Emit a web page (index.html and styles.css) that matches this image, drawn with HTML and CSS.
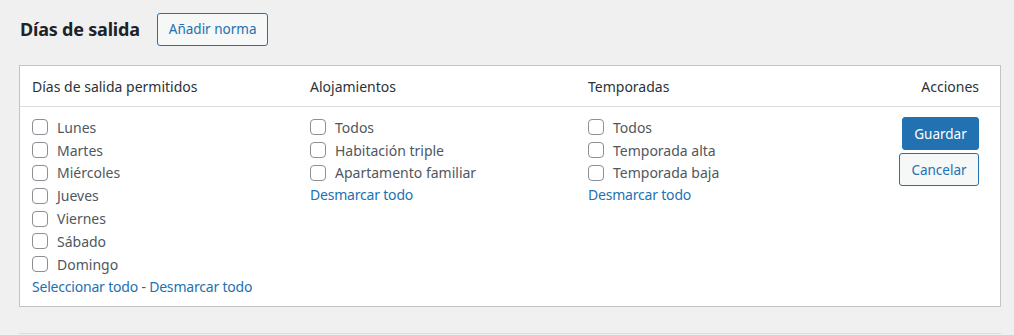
FILE: index.html
```html
<!DOCTYPE html>
<html lang="es">

<head>
    <meta charset="UTF-8">
    <meta name="viewport" content="width=device-width, initial-scale=1.0">
    <title>Días de salida</title>
    <link rel="stylesheet" href="styles.css">
</head>

<body>
    <div class="wrap">
        <div class="title-row">
            <h2 class="title">Días de salida</h2>
            <button class="btn btn-secondary">Añadir norma</button>
        </div>

        <div class="rules-table">
            <div class="head">
                <div class="cell">Días de salida permitidos</div>
                <div class="cell">Alojamientos</div>
                <div class="cell">Temporadas</div>
                <div class="cell cell-actions">Acciones</div>
            </div>
            <div class="body">
                <div class="cell">
                    <label class="check"><input type="checkbox"> Lunes</label>
                    <label class="check"><input type="checkbox"> Martes</label>
                    <label class="check"><input type="checkbox"> Miércoles</label>
                    <label class="check"><input type="checkbox"> Jueves</label>
                    <label class="check"><input type="checkbox"> Viernes</label>
                    <label class="check"><input type="checkbox"> Sábado</label>
                    <label class="check"><input type="checkbox"> Domingo</label>
                    <div class="links"><a href="#">Seleccionar todo</a> - <a href="#">Desmarcar todo</a></div>
                </div>
                <div class="cell">
                    <label class="check"><input type="checkbox"> Todos</label>
                    <label class="check"><input type="checkbox"> Habitación triple</label>
                    <label class="check"><input type="checkbox"> Apartamento familiar</label>
                    <div class="links"><a href="#">Desmarcar todo</a></div>
                </div>
                <div class="cell">
                    <label class="check"><input type="checkbox"> Todos</label>
                    <label class="check"><input type="checkbox"> Temporada alta</label>
                    <label class="check"><input type="checkbox"> Temporada baja</label>
                    <div class="links"><a href="#">Desmarcar todo</a></div>
                </div>
                <div class="cell cell-actions">
                    <button class="btn btn-primary">Guardar</button>
                    <button class="btn btn-secondary">Cancelar</button>
                </div>
            </div>
        </div>

        <div class="next-box"></div>
    </div>
</body>

</html>
```

FILE: styles.css
```css
body {
    margin: 0;
    background: #f0f0f1;
    font-family: "Noto Sans", "Open Sans", sans-serif;
    font-size: 14px;
    color: #50575e;
}

.wrap {
    padding: 12px 13px 0 19px;
}

.title-row {
    display: flex;
    align-items: center;
    gap: 17px;
    height: 34px;
    margin-left: 1px;
}

.title {
    margin: 0;
    font-size: 18px;
    font-weight: 700;
    letter-spacing: -0.2px;
    color: #1d2327;
}

.btn {
    font-family: inherit;
    font-size: 13.5px;
    border-radius: 3px;
    border: 1px solid #2271b1;
    padding: 0 11px;
    height: 33px;
    cursor: pointer;
}

.btn-secondary {
    background: #f6f7f7;
    color: #2271b1;
}

.btn-primary {
    background: #2271b1;
    color: #fff;
}

.rules-table {
    margin-top: 19px;
    background: #fff;
    border: 1px solid #c3c4c7;
}

.head,
.body {
    display: grid;
    grid-template-columns: 278px 278px 278px 1fr;
}

.head {
    height: 40px;
    align-items: center;
    border-bottom: 1px solid #dcdcde;
    color: #2c3338;
}

.cell {
    padding: 0 12px;
}

.cell-actions {
    text-align: right;
    padding-right: 21px;
}

.body {
    padding: 9px 0 8px;
}

.check {
    display: flex;
    align-items: center;
    gap: 9px;
    height: 22.8px;
}

.check input {
    appearance: none;
    margin: 0;
    width: 16px;
    height: 16px;
    border: 1px solid #8c8f94;
    border-radius: 4px;
    background: #fff;
}

.links {
    line-height: 22px;
    letter-spacing: -0.2px;
}

.links a {
    color: #2271b1;
    text-decoration: none;
}

.body .cell-actions {
    display: flex;
    flex-direction: column;
    align-items: flex-end;
    gap: 3px;
}

.body .btn-primary {
    width: 77px;
    height: 33px;
    margin-top: 1px;
}

.body .btn-secondary {
    width: 80px;
    height: 33px;
}

.next-box {
    margin-top: 26px;
    height: 10px;
    border-top: 1px solid #dcdcde;
}
```
